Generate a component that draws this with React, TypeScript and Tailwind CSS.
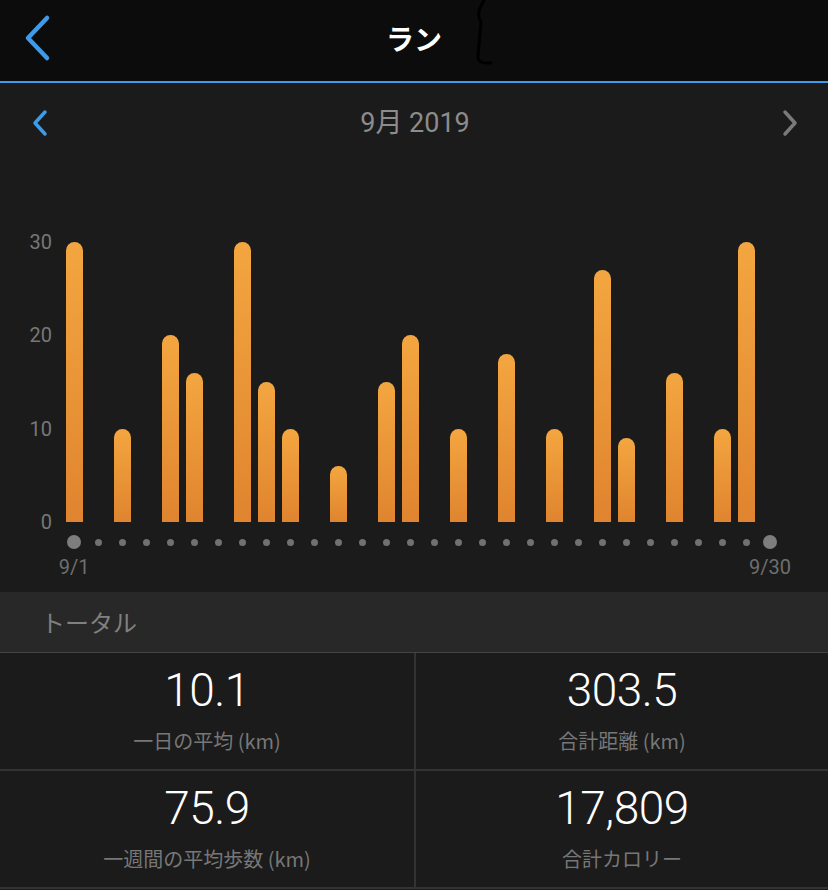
import React from "react";

const days: number[] = [
  30, 0, 10, 0, 20, 16, 0, 30, 15, 10, 0, 6, 0, 15, 20, 0, 10, 0, 18, 0, 10, 0, 27, 9, 0, 16, 0, 10, 30, 0,
];

const PX_PER_KM = 280 / 30;

interface Stat {
  value: string;
  label: string;
}

const stats: Stat[] = [
  { value: "10.1", label: "一日の平均 (km)" },
  { value: "303.5", label: "合計距離 (km)" },
  { value: "75.9", label: "一週間の平均歩数 (km)" },
  { value: "17,809", label: "合計カロリー" },
];

const font = { fontFamily: '"Roboto", "Noto Sans CJK JP", sans-serif' };
const jp = { fontFamily: '"Noto Sans CJK JP", sans-serif' };

function App() {
  return (
    <div className="w-[828px] h-[890px] overflow-hidden bg-[#1b1b1b] text-white" style={font}>
      {/* header */}
      <header className="relative h-[83px] bg-[#0c0c0c] border-b-2 border-[#3d9be9] flex items-center justify-center">
        <svg className="absolute left-[20px] top-[12px]" width="36" height="52" viewBox="0 0 36 52">
          <path d="M27 6 L8 26 L27 46" fill="none" stroke="#3d9be9" strokeWidth="4.5" strokeLinecap="round" strokeLinejoin="round" />
        </svg>
        <h1 className="text-[28px] font-bold leading-none mb-[6px]" style={jp}>
          ラン
        </h1>
        <svg className="absolute left-[470px] top-0" width="26" height="70" viewBox="0 0 26 70">
          <path d="M14 0 C10 8 6 14 11 22 L8 56 Q7 64 21 63" fill="none" stroke="#000" strokeWidth="3" strokeLinecap="round" />
        </svg>
      </header>

      {/* month nav */}
      <div className="h-[80px] flex items-center justify-between px-[30px]">
        <svg width="22" height="30" viewBox="0 0 22 30">
          <path d="M15 4 L5 15 L15 26" fill="none" stroke="#3d9be9" strokeWidth="3.5" strokeLinecap="round" strokeLinejoin="round" />
        </svg>
        <span className="text-[27px] text-[#8c8c8c] leading-none mb-[2px]">
          9<span style={jp}>月</span> 2019
        </span>
        <svg width="22" height="30" viewBox="0 0 22 30" className="mr-[-2px]">
          <path d="M7 4 L17 15 L7 26" fill="none" stroke="#7a7a7a" strokeWidth="3.5" strokeLinecap="round" strokeLinejoin="round" />
        </svg>
      </div>

      {/* chart */}
      <section className="h-[429px] pt-[69px]">
        <div className="flex items-start">
          <div className="w-[62px] h-[300px] pr-[10px] flex flex-col justify-between items-end text-[20px] leading-[20px] text-[#777]">
            <span>30</span>
            <span>20</span>
            <span>10</span>
            <span>0</span>
          </div>
          <div className="flex flex-col mt-[10px]">
            <div className="h-[280px] flex items-end">
              {days.map((km, i) => (
                <div key={i} className="w-[24px] flex justify-center items-end">
                  {km > 0 && (
                    <div
                      className="w-[17px] rounded-t-full bg-gradient-to-b from-[#f3a640] to-[#e0842f]"
                      style={{ height: km * PX_PER_KM }}
                    />
                  )}
                </div>
              ))}
            </div>
            <div className="h-[20px] mt-[10px] flex items-center">
              {days.map((_, i) => (
                <div key={i} className="w-[24px] flex justify-center items-center">
                  {i === 0 || i === days.length - 1 ? (
                    <div className="w-[14px] h-[14px] rounded-full bg-[#7d7d7d]" />
                  ) : (
                    <div className="w-[7px] h-[7px] rounded-full bg-[#717171]" />
                  )}
                </div>
              ))}
            </div>
            <div className="mt-[5px] flex justify-between text-[20px] leading-[20px] text-[#6e6e6e]">
              <div className="w-[24px] flex justify-center whitespace-nowrap">9/1</div>
              <div className="w-[24px] flex justify-center whitespace-nowrap">9/30</div>
            </div>
          </div>
        </div>
      </section>

      {/* totals */}
      <div className="h-[60px] bg-[#282828] flex items-center px-[41px]">
        <span className="text-[24px] text-[#808080]" style={jp}>
          トータル
        </span>
      </div>
      <div className="grid grid-cols-[416px_1fr] border-t border-[#444]">
        {stats.map((s, i) => (
          <div
            key={s.label}
            className={
              "h-[118px] flex flex-col items-center pt-[14px] border-b-2 border-[#333] " +
              (i % 2 === 0 ? "border-r-2 border-r-[#333]" : "")
            }
          >
            <span className="text-[46px] leading-[46px] font-light tracking-[-0.5px]">{s.value}</span>
            <span className="mt-[18px] text-[20px] leading-[20px] text-[#777]" style={jp}>
              {s.label}
            </span>
          </div>
        ))}
      </div>
    </div>
  );
}

export default App;
